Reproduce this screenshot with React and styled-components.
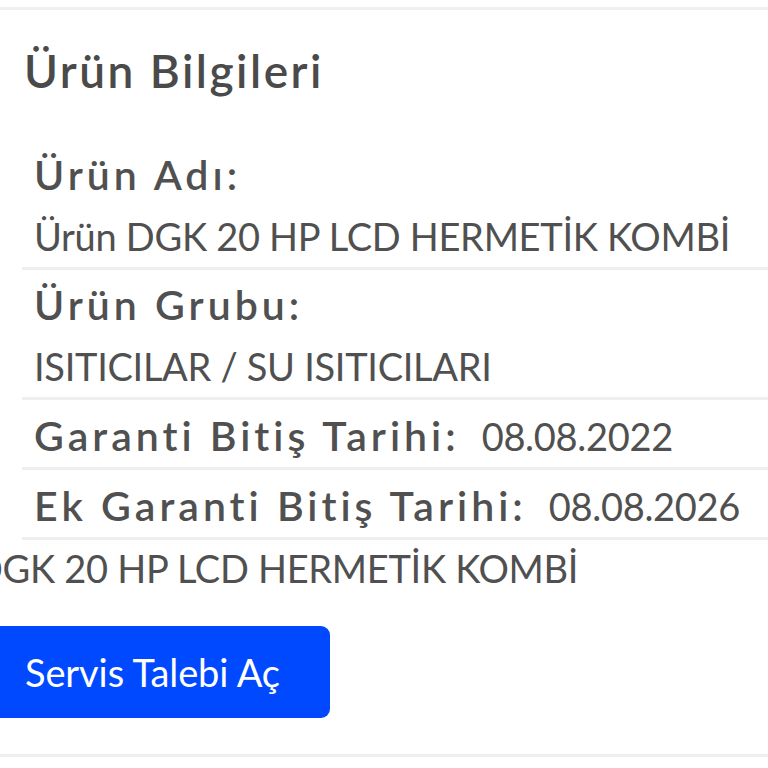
import React from "react";
import styled, { createGlobalStyle } from "styled-components";

const Global = createGlobalStyle`
  html, body { margin: 0; padding: 0; background: #fff; }
  body { font-family: Lato, "Noto Sans", sans-serif; color: #4d4d4d; overflow: hidden; }
`;

const Page = styled.div`
  width: 768px;
  height: 768px;
  overflow: hidden;
  padding-top: 7px;
  box-sizing: border-box;
`;

const Card = styled.section`
  border-top: 3px solid #efefef;
  border-bottom: 3px solid #efefef;
  padding-bottom: 36px;
`;

const Title = styled.h2`
  margin: 0;
  padding: 33px 0 0 24px;
  height: 102px;
  box-sizing: border-box;
  font-size: 46px;
  font-weight: 600;
  letter-spacing: 2.5px;
  line-height: 56px;
  color: #4a4a4a;
`;

const InfoList = styled.div`
  margin-left: 22px;
  display: flex;
  flex-direction: column;
`;

const Row = styled.div`
  border-bottom: 3px solid #efefef;
  padding: 0 0 5px 12px;
  height: ${(p) => p.$h}px;
  display: flex;
  flex-direction: column;
  align-items: flex-start;
  justify-content: flex-end;
  box-sizing: border-box;
`;

const InlineLine = styled.div`
  display: flex;
  align-items: baseline;
  gap: 22px;
`;

const Label = styled.div`
  font-size: 41px;
  font-weight: 600;
  letter-spacing: 4px;
  line-height: 50px;
  color: #505050;
  white-space: nowrap;
`;

const Value = styled.div`
  font-size: 38px;
  font-weight: 400;
  line-height: 52px;
  margin-top: ${(p) => (p.$stacked ? 10 : 0)}px;
  color: #505050;
  white-space: nowrap;
  letter-spacing: -0.3px;
`;

const Overflow = styled.div`
  margin-left: -26px;
  display: flex;
  flex-direction: column;
  align-items: flex-start;
  gap: 28px;
`;

const Marquee = styled.div`
  font-size: 38px;
  line-height: 60px;
  margin-top: -2px;
  color: #505050;
  white-space: nowrap;
  letter-spacing: -0.3px;
`;

const Button = styled.button`
  margin-left: -12px;
  width: 368px;
  height: 92px;
  background: #0049ff;
  border: none;
  border-radius: 9px;
  color: #fff;
  font-family: Lato, "Noto Sans", sans-serif;
  font-size: 38px;
  font-weight: 400;
  text-align: left;
  padding: 0 0 0 63px;
  letter-spacing: -0.1px;
`;

export default function App() {
  return (
    <Page>
      <Global />
      <Card>
        <Title>Ürün Bilgileri</Title>
        <InfoList>
          <Row $h={158}>
            <Label>Ürün Adı:</Label>
            <Value $stacked>Ürün DGK 20 HP LCD HERMETİK KOMBİ</Value>
          </Row>
          <Row $h={130}>
            <Label>Ürün Grubu:</Label>
            <Value $stacked>ISITICILAR / SU ISITICILARI</Value>
          </Row>
          <Row $h={70}>
            <InlineLine>
              <Label>Garanti Bitiş Tarihi:</Label>
              <Value>08.08.2022</Value>
            </InlineLine>
          </Row>
          <Row $h={70}>
            <InlineLine>
              <Label>Ek Garanti Bitiş Tarihi:</Label>
              <Value>08.08.2026</Value>
            </InlineLine>
          </Row>
        </InfoList>
        <Overflow>
          <Marquee>DGK 20 HP LCD HERMETİK KOMBİ</Marquee>
          <Button>Servis Talebi Aç</Button>
        </Overflow>
      </Card>
    </Page>
  );
}
